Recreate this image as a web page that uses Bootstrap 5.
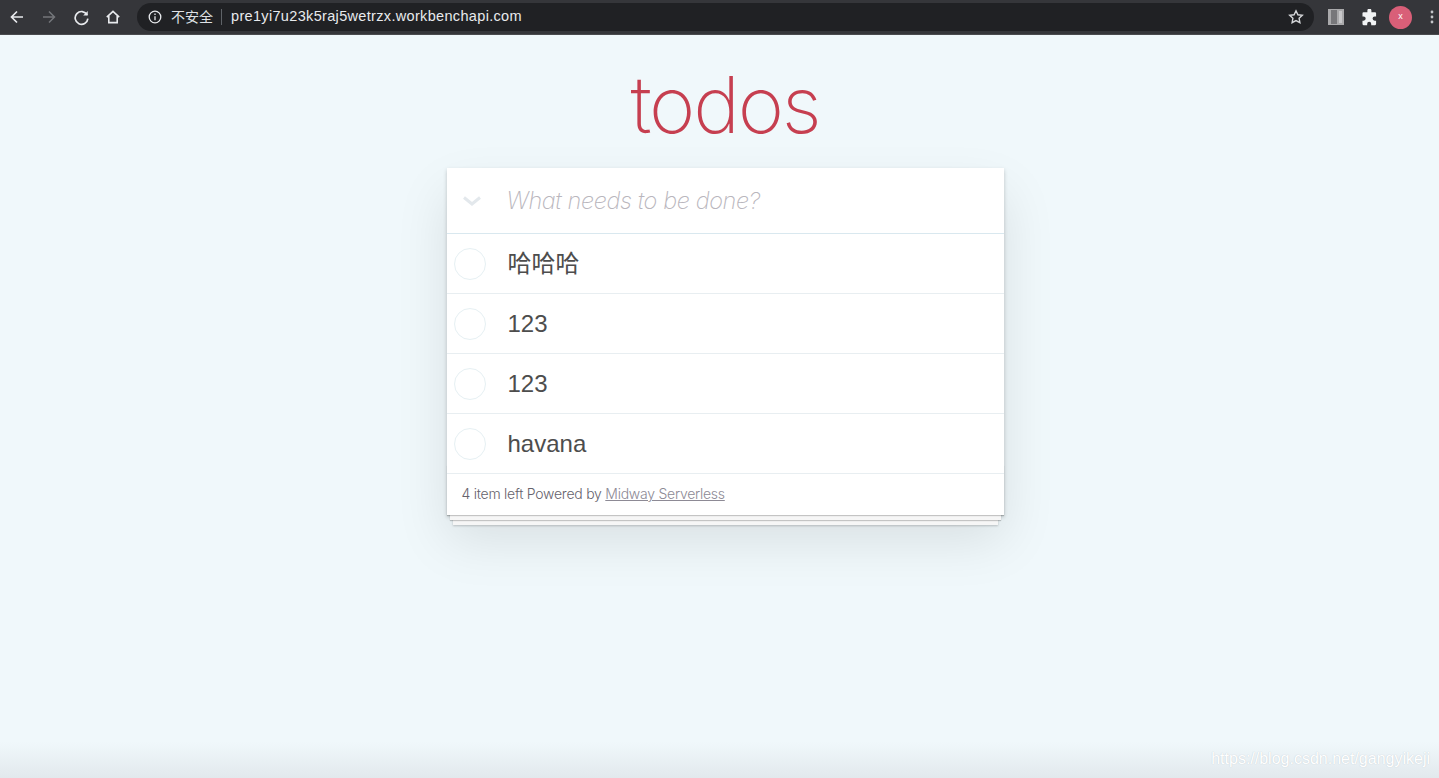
<!DOCTYPE html>
<html lang="en">
<head>
<meta charset="utf-8">
<title>todos</title>
<link href="https://cdn.jsdelivr.net/npm/bootstrap@5.3.0/dist/css/bootstrap.min.css" rel="stylesheet">
<style>
html,body{height:100%}
body{background:#f0f8fb;font-family:"Liberation Sans","Noto Sans CJK SC",sans-serif;overflow:hidden;color:#4d4d4d}
.shell{height:778px;position:relative;overflow:hidden}
.chrome-bar{height:35px;background:#35363a;padding:0 0 0 1px;flex:none;border-bottom:1px solid #4a4b4e}
.tb-btn{width:32px;height:32px;flex:none}
.omni{width:1177px;height:28px;background:#202124;border-radius:14px;margin-left:8px;color:#e8eaed;font-size:13px;padding:0 10px 0 11px}
.omni-warn{font-size:14px;line-height:18px;color:#dfe1e5;font-family:"Noto Sans CJK SC",sans-serif;margin:-2px 0 0 9px}
.omni-sep{width:1px;height:16px;background:#5f6368;margin:0 9px 0 8px}
.omni-url{letter-spacing:.33px;font-size:14.5px;color:#e8eaed}
.ext-tray{margin-left:14px}
.ext-puzzle{margin-left:17px}
.avatar-dot{width:23px;height:23px;border-radius:50%;background:#d95f78;color:#fff;font-size:9px;margin-left:11px}
.ext-dots{margin-left:18px}
main{padding-left:11px}
.app-title{font-family:Inter,"Liberation Sans",sans-serif;font-weight:200;font-size:79px;line-height:80px;color:#c63f50;letter-spacing:-2.2px;margin:29px 0 24px;text-align:center}
.todo-box{width:557px;margin:0 auto;position:relative;background:#fff;box-shadow:0 2px 4px rgba(0,0,0,.2),0 25px 50px rgba(0,0,0,.1);z-index:2}
.todo-box::before{content:"";position:absolute;left:0;right:0;bottom:0;height:50px;z-index:-1;box-shadow:0 1px 1px rgba(0,0,0,.2),0 8px 0 -3px #f6f6f6,0 9px 1px -3px rgba(0,0,0,.2),0 16px 0 -6px #f6f6f6,0 17px 2px -6px rgba(0,0,0,.2)}
.todo-head{height:66px;border-bottom:1px solid #d9e8ef;background:#fff;position:relative}
.chev{width:50px;flex:none}
.todo-ph{font-family:Inter,"Liberation Sans",sans-serif;font-weight:200;font-style:italic;font-size:23.5px;color:#b9b6bd;letter-spacing:-.38px;margin-left:10px}
.todo-row{height:60px;border-bottom:1px solid #e8eef1;background:#fff;position:relative;padding:0}
.tick{width:32px;height:32px;border:1px solid #e6f0f3;border-radius:50%;margin:0 22px 0 7px;flex:none}
.todo-txt{font-size:24px;color:#4d4d4d;line-height:1;font-family:"Liberation Sans","Noto Sans CJK SC",sans-serif;padding-top:1px}
.todo-foot{height:41px;padding:0 15px 2px;font-family:Inter,"Liberation Sans",sans-serif;font-weight:300;font-size:14px;color:#66626c;background:#fff;position:relative;letter-spacing:-.25px}
.todo-foot a{color:#8d8a95}
.floor-glow{position:absolute;left:0;right:0;bottom:0;height:36px;background:linear-gradient(to bottom,rgba(200,205,212,0),rgba(205,210,216,.4))}
.wm{position:absolute;right:9px;bottom:7px;font-size:16px;color:#fff;text-shadow:0 0 1px rgba(170,180,190,.75)}
</style>
</head>
<body>
<div class="shell d-flex flex-column">
  <nav class="chrome-bar d-flex align-items-center">
    <div class="tb-btn d-flex align-items-center justify-content-center"><svg width="16" height="16" viewBox="0 0 16 16" fill="none" stroke="#e8eaed" stroke-width="1.7"><path d="M14 8H2.5M8 2.5 2.5 8 8 13.5"/></svg></div>
    <div class="tb-btn d-flex align-items-center justify-content-center"><svg width="16" height="16" viewBox="0 0 16 16" fill="none" stroke="#74767a" stroke-width="1.5"><path d="M2 8h11.5M8 2.5 13.5 8 8 13.5"/></svg></div>
    <div class="tb-btn d-flex align-items-center justify-content-center"><svg width="17" height="17" viewBox="0 0 16 16" fill="none" stroke="#e8eaed" stroke-width="1.6"><path d="M13.3 5.5A6 6 0 1 0 14 9"/><path d="M13.9 1.8v4.4H9.6z" fill="#e8eaed" stroke="none"/></svg></div>
    <div class="tb-btn d-flex align-items-center justify-content-center"><svg width="16" height="16" viewBox="0 0 16 16" fill="none" stroke="#e8eaed" stroke-width="1.6"><path d="M1.8 8.2 8 2.4l6.2 5.8M3.8 7v6.6h8.4V7"/></svg></div>
    <div class="omni d-flex align-items-center">
      <svg width="14" height="14" viewBox="0 0 14 14" fill="none" stroke="#e8eaed" stroke-width="1.3"><circle cx="7" cy="7" r="5.8"/><path d="M7 6.2v4M7 3.6v1.4"/></svg>
      <span class="omni-warn">不安全</span>
      <span class="omni-sep"></span>
      <span class="omni-url">pre1yi7u23k5raj5wetrzx.workbenchapi.com</span>
      <svg class="ms-auto" width="16" height="16" viewBox="0 0 16 16" fill="none" stroke="#d5d7da" stroke-width="1.4"><path d="M8 1.8l1.9 4 4.4.5-3.2 3 .8 4.4L8 11.6l-3.9 2.1.8-4.4-3.2-3 4.4-.5z"/></svg>
    </div>
    <div class="ext-tray d-flex align-items-center">
      <svg width="16" height="16" viewBox="0 0 16 16"><rect width="16" height="16" fill="#a9a9ab"/><rect x="3" y="1" width="6" height="14" fill="#77777a"/><rect x="11" y="2" width="3" height="12" fill="#c8c8ca"/></svg>
      <svg class="ext-puzzle" width="17" height="17" viewBox="0 0 16 16" fill="#f1f3f4"><path d="M6 1.5a1.9 1.9 0 0 1 3.8 0V3h3.4a1 1 0 0 1 1 1v3h-1.3a2 2 0 0 0 0 4h1.3v3.2a1 1 0 0 1-1 1H9.6V14a1.9 1.9 0 0 0-3.8 0v1.2H2.4a1 1 0 0 1-1-1V11h1a2 2 0 0 0 0-4h-1V4a1 1 0 0 1 1-1H6z"/></svg>
      <div class="avatar-dot d-flex align-items-center justify-content-center">x</div>
      <svg class="ext-dots" width="4" height="14" viewBox="0 0 4 14" fill="#c4c6c9"><circle cx="2" cy="2" r="1.4"/><circle cx="2" cy="7" r="1.4"/><circle cx="2" cy="12" r="1.4"/></svg>
    </div>
  </nav>
  <main>
    <h1 class="app-title">todos</h1>
    <section class="todo-box">
      <div class="todo-head d-flex align-items-center">
        <div class="chev d-flex justify-content-center"><svg width="20" height="10" viewBox="0 0 20 10" fill="none" stroke="#e3e8ec" stroke-width="3"><path d="M2 1.5 10 8l8-6.5"/></svg></div>
        <span class="todo-ph">What needs to be done?</span>
      </div>
      <ul class="list-unstyled m-0">
        <li class="todo-row d-flex align-items-center"><span class="tick"></span><span class="todo-txt">哈哈哈</span></li>
        <li class="todo-row d-flex align-items-center"><span class="tick"></span><span class="todo-txt">123</span></li>
        <li class="todo-row d-flex align-items-center"><span class="tick"></span><span class="todo-txt">123</span></li>
        <li class="todo-row d-flex align-items-center"><span class="tick"></span><span class="todo-txt">havana</span></li>
      </ul>
      <footer class="todo-foot d-flex align-items-center"><span>4 item left Powered by <a href="#">Midway Serverless</a></span></footer>
    </section>
  </main>
  <div class="floor-glow"></div>
  <div class="wm">https://blog.csdn.net/gangyikeji</div>
</div>
<script src="https://cdn.jsdelivr.net/npm/bootstrap@5.3.0/dist/js/bootstrap.bundle.min.js"></script>
</body>
</html>
